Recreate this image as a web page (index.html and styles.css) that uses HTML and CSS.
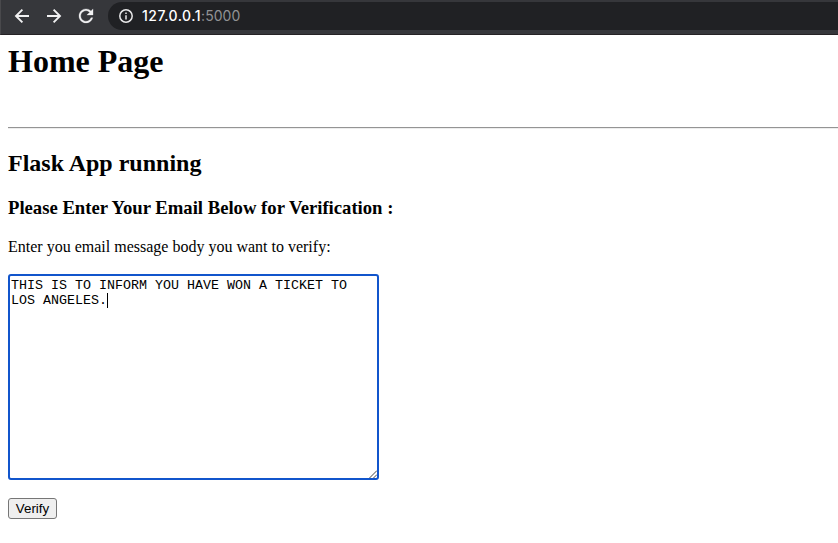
FILE: index.html
```
<!DOCTYPE html>
<html lang="en">
<head>
<meta charset="utf-8">
<title>Home Page</title>
<link rel="stylesheet" href="styles.css">
</head>
<body>
<header class="toolbar">
  <nav class="nav">
    <svg class="icon" viewBox="0 0 16 16"><path d="M15 8H2.2M8.4 1.6L2 8l6.4 6.4"/></svg>
    <svg class="icon" viewBox="0 0 16 16"><path d="M1 8h12.8M7.6 1.6L14 8l-6.4 6.4"/></svg>
    <svg class="icon" viewBox="2.9 3 18.2 18.2"><path class="solid" d="M17.65 6.35C16.2 4.9 14.21 4 12 4c-4.42 0-7.99 3.58-7.99 8s3.57 8 7.99 8c3.73 0 6.84-2.55 7.73-6h-2.08c-.82 2.33-3.04 4-5.65 4-3.31 0-6-2.69-6-6s2.69-6 6-6c1.66 0 3.14.69 4.22 1.78L13 11h7V4l-2.35 2.35z"/></svg>
  </nav>
  <div class="address">
    <svg class="info" viewBox="0 0 14 14"><circle cx="7" cy="7" r="6.2"/><path d="M7 6.2v4.2M7 3.4v1.5"/></svg>
    <span class="url">127.0.0.1<span class="port">:5000</span></span>
  </div>
</header>
<main class="page">
  <h1>Home Page</h1>
  <hr>
  <h2>Flask App running</h2>
  <h3>Please Enter Your Email Below for Verification :</h3>
  <p>Enter you email message body you want to verify:</p>
  <div class="message">THIS IS TO INFORM YOU HAVE WON A TICKET TO<br>LOS ANGELES.<span class="caret"></span>
    <svg class="grip" viewBox="0 0 9 9"><path d="M1.5 9L9 1.5M5.5 9L9 5.5"/></svg>
  </div>
  <button class="verify" type="button">Verify</button>
</main>
</body>
</html>
```
FILE: styles.css
```
* { box-sizing: border-box; }
body {
  margin: 0;
  height: 543px;
  overflow: hidden;
  background: #fff;
  color: #000;
  font: 16px/18px "Liberation Serif", serif;
}
.toolbar {
  display: flex;
  align-items: flex-start;
  height: 35px;
  padding: 2px 0 0 13px;
  background: #36373b;
  border-bottom: 1px solid #252225;
  border-left: 1px solid #49494c;
}
.nav {
  display: flex;
  gap: 16px;
  padding-top: 6px;
  margin-right: 14px;
}
.icon {
  width: 16px;
  height: 16px;
  overflow: visible;
  fill: none;
  stroke: #f1f1f2;
  stroke-width: 1.9;
}
.icon .solid { fill: #f1f1f2; stroke: #f1f1f2; stroke-width: 0.3; }
.address {
  flex: 1;
  display: flex;
  align-items: center;
  height: 28px;
  padding-left: 11px;
  border-radius: 14px 0 0 14px;
  background: #202124;
}
.info {
  width: 14px;
  height: 14px;
  margin-right: 9px;
  fill: none;
  stroke: #e8e8e9;
  stroke-width: 1.5;
}
.url {
  color: #fff;
  font: 500 14px/18px Inter, sans-serif;
  letter-spacing: 0.5px;
}
.port { color: #919294; font-weight: 400; letter-spacing: 0.05px; }
.page { padding: 8px 0 0 8px; }
h1 { margin: 0; font-size: 32px; line-height: 37px; }
hr {
  height: 2px;
  margin: 47px 0 0;
  border: 0;
  border-top: 1px solid #949494;
  border-bottom: 1px solid #ededed;
}
h2 { margin: 20px 0 0; font-size: 24px; line-height: 28px; }
h3 { margin: 20px 0 0; font-size: 18.72px; line-height: 22px; letter-spacing: -0.02px; }
p { margin: 19px 0 0; }
.message {
  position: relative;
  width: 371px;
  height: 206px;
  margin-top: 18px;
  padding: 2px 1px;
  border: 2px solid #1155cc;
  border-radius: 3px;
  font: 13.333px/15px "Liberation Mono", monospace;
}
.caret {
  display: inline-block;
  width: 1px;
  height: 15px;
  margin-right: -1px;
  background: #000;
  vertical-align: top;
}
.grip {
  position: absolute;
  right: 0;
  bottom: 0;
  width: 9px;
  height: 9px;
  fill: none;
  stroke: #444;
  stroke-width: 1;
}
.verify {
  display: block;
  width: 49px;
  height: 21px;
  margin-top: 18px;
  padding: 0;
  border: 1px solid #767676;
  border-radius: 3px;
  background: #efefef;
  color: #000;
  font: 13.333px/17px "Liberation Sans", sans-serif;
}
```
